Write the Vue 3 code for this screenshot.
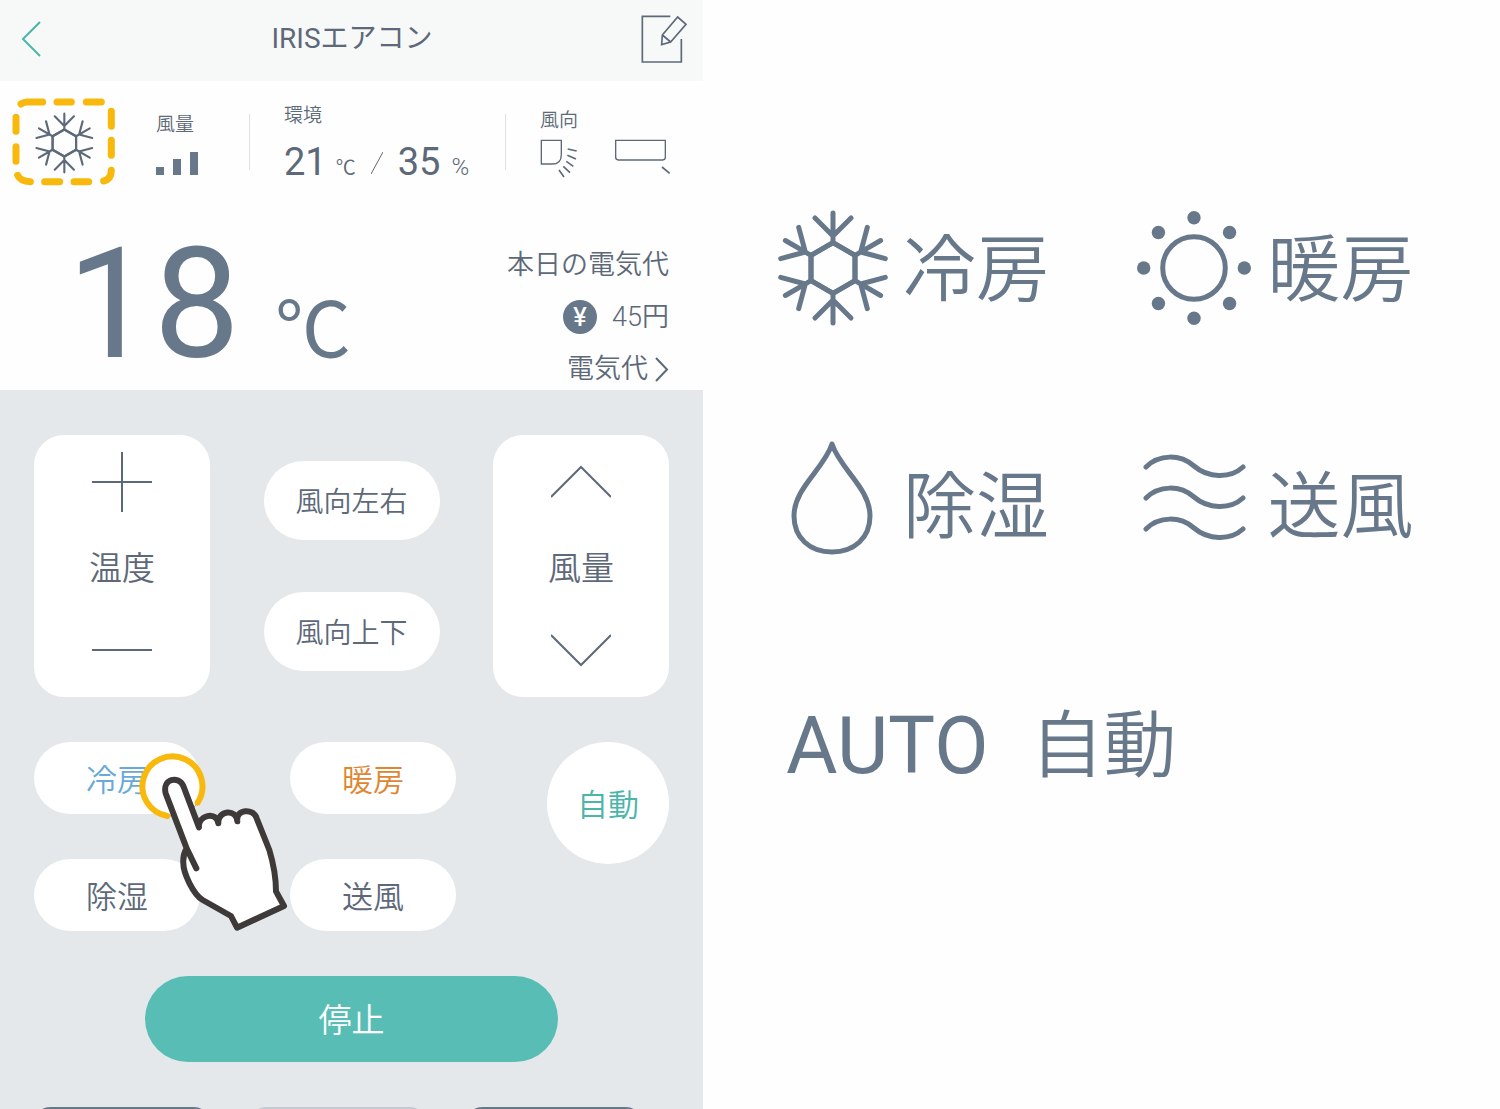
<template>
  <div class="guide">
    <main class="remote">
      <header class="header">
        <button class="icon-button back" aria-label="戻る">
          <svg width="20" height="36" viewBox="0 0 20 36"><path d="M19 1L2 18l17 17" /></svg>
        </button>
        <h1 class="title">IRISエアコン</h1>
        <button class="icon-button edit" aria-label="編集">
          <svg width="48" height="50" viewBox="870 42 144 150">
            <path d="M961 49H877V186H994V117" />
            <path d="M935 134L937 105L983 51L1008 73L962 126ZM937 105L962 126" />
          </svg>
        </button>
      </header>

      <!-- Status -->
      <section class="status">
        <svg class="current-mode" width="104" height="88" viewBox="36 294 312 264">
          <path
            class="dashes"
            d="M63 312Q72 306 80 306H128M171 306H214M259 306H304M334 334V379M334 421V466M334 511Q334 538 311 543M266 545H222M179 545H134M91 545Q62 545 53 526M48 484V440M48 394V352"
          />
          <g class="flake" transform="translate(193 429) scale(1.6)">
            <path v-for="angle in flakeAngles" :key="angle" :d="flakeArm" :transform="`rotate(${angle})`" />
          </g>
        </svg>

        <div class="fan">
          <span class="label">風量</span>
          <svg class="bars" width="42" height="23" viewBox="0 0 42 23">
            <path d="M0 15h8v8H0zM17 7h8v16h-8zM34 0h8v23h-8z" />
          </svg>
        </div>
        <div class="divider"></div>
        <div class="environment">
          <span class="label">環境</span>
          <div class="readings">
            <span class="number">21</span>
            <span class="unit">℃</span>
            <svg class="slash" width="12" height="24" viewBox="0 0 12 24"><path d="M12 1L0 23" /></svg>
            <span class="number">35</span>
            <span class="unit percent">%</span>
          </div>
        </div>
        <div class="divider"></div>
        <div class="direction">
          <span class="label">風向</span>
          <div class="direction-icons">
            <svg width="38" height="40" viewBox="568 418 114 120">
              <path d="M572 422H632V465Q632 493 604 493H572Z" />
              <path class="bold" d="M651 448L678 454M650 467L676 478M647 485L668 500M638 500L658 519M625 511L640 532" />
            </svg>
            <svg width="57" height="40" viewBox="790 418 171 120">
              <path d="M795 422H944V473Q944 481 936 481H803Q795 481 795 473Z" />
              <path class="bold" d="M934 502L957 521" />
            </svg>
          </div>
        </div>
      </section>

      <!-- Set temperature and cost -->
      <section class="summary">
        <div class="temperature">
          <span class="degrees">18</span>
          <span class="celsius">℃</span>
        </div>
        <div class="cost">
          <span>本日の電気代</span>
          <span class="price"><span class="yen">¥</span>45円</span>
          <a class="cost-link" href="#">
            電気代
            <svg width="15" height="25" viewBox="0 0 15 25"><path d="M2 1L13 12.5L2 24" /></svg>
          </a>
        </div>
      </section>

      <section class="panel">
        <div class="adjust">
          <div class="stepper">
            <button class="icon-button" aria-label="温度を上げる">
              <svg width="60" height="60" viewBox="0 0 60 60"><path d="M0 30H60M30 0V60" /></svg>
            </button>
            <span>温度</span>
            <button class="icon-button" aria-label="温度を下げる">
              <svg width="60" height="60" viewBox="0 0 60 60"><path d="M0 30H60" /></svg>
            </button>
          </div>
          <div class="swings">
            <button class="swing">風向左右</button>
            <button class="swing">風向上下</button>
          </div>
          <div class="stepper">
            <button class="icon-button" aria-label="風量を上げる">
              <svg width="60" height="60" viewBox="0 0 60 60"><path d="M0 45L30 15L60 45" /></svg>
            </button>
            <span>風量</span>
            <button class="icon-button" aria-label="風量を下げる">
              <svg width="60" height="60" viewBox="0 0 60 60"><path d="M0 15L30 45L60 15" /></svg>
            </button>
          </div>
        </div>

        <div class="modes">
          <div class="mode-grid">
            <button v-for="mode in modes" :key="mode.name" class="mode" :class="mode.color">{{ mode.name }}</button>
          </div>
          <button class="mode auto">自動</button>
          <svg class="pointer" width="152" height="182" viewBox="414 90 456 546">
            <circle cx="518" cy="198" r="90" fill="#fff" />
            <path class="ring" d="M502 288A90 90 0 1 1 593 248" />
            <path
              class="hand"
              d="M560 385L497 220C486 176 536 166 550 198L597 322C592 286 650 272 655 310C652 270 711 266 712 304C706 266 762 264 770 295L808 390C820 430 828 470 828 514L852 558L711 623L693 588L608 540C580 523 550 460 550 430Q548 405 560 385L589 445"
            />
          </svg>
        </div>

        <button class="stop">停止</button>

        <div class="more">
          <button class="more-button" aria-label="メニュー1"></button>
          <button class="more-button muted" aria-label="メニュー2"></button>
          <button class="more-button" aria-label="メニュー3"></button>
        </div>
      </section>
    </main>

    <!-- Mode icons -->
    <aside class="legend">
      <div class="legend-item">
        <svg width="120" height="116" viewBox="0 0 120 116">
          <g transform="translate(62 58)">
            <path v-for="angle in flakeAngles" :key="angle" :d="flakeArm" :transform="`rotate(${angle})`" />
          </g>
        </svg>
        <span>冷房</span>
      </div>
      <div class="legend-item">
        <svg width="120" height="116" viewBox="0 0 120 116">
          <circle cx="58" cy="58" r="31.3" />
          <circle v-for="dot in sunDots" :key="dot.id" class="dot" :cx="dot.x" :cy="dot.y" r="6.7" />
        </svg>
        <span>暖房</span>
      </div>
      <div class="legend-item">
        <svg width="120" height="116" viewBox="0 0 120 116">
          <path d="M61 -3C53 22 23 41 23 69C23 91 39 105 61 105S99 91 99 69C99 41 69 22 61 -3Z" />
        </svg>
        <span>除湿</span>
      </div>
      <div class="legend-item">
        <svg width="120" height="116" viewBox="0 0 120 116">
          <path
            d="M10 20C23 7 44 7 58 19S94 32 107 20M10 51C23 38 44 38 58 50S94 63 107 51M10 82C23 69 44 69 58 81S94 94 107 82"
          />
        </svg>
        <span>送風</span>
      </div>
      <div class="legend-item legend-auto">
        <span class="auto-mark">AUTO</span>
        <span>自動</span>
      </div>
    </aside>
  </div>
</template>

<script setup>
const modes = [
  { name: '冷房', color: 'cool' },
  { name: '暖房', color: 'heat' },
  { name: '除湿', color: '' },
  { name: '送風', color: '' },
];

// one sixth of the snowflake, repeated around the centre
const flakeAngles = [0, 60, 120, 180, 240, 300];
const flakeArm = 'M-22 -12.7L0 -25.4L22 -12.7M0 -25.4V-55M-18 -50L0 -32L18 -50';

const sunDots = [0, 1, 2, 3, 4, 5, 6, 7].map((i) => ({
  id: i,
  x: 58 + 50.3 * Math.cos((i * Math.PI) / 4),
  y: 58 + 50.3 * Math.sin((i * Math.PI) / 4),
}));
</script>

<style>
body {
  background: #fefefe;
}
</style>

<style scoped>
.guide {
  display: grid;
  grid-template-columns: 703fr 797fr;
  height: 100vh;
  overflow: hidden;
  font-family: Roboto, "Noto Sans CJK JP", sans-serif;
  font-weight: 350;
  color: #5d6979;
}

button {
  font: inherit;
  color: inherit;
  border: none;
  padding: 0 0 2px;
  background: #fff;
  cursor: pointer;
}

svg {
  display: block;
  flex: none;
  fill: none;
  stroke: #5d6979;
  stroke-width: 2;
}

.icon-button {
  padding: 0;
  background: none;
}

.remote {
  display: flex;
  flex-direction: column;
  min-width: 0;
}

.header {
  display: grid;
  grid-template-columns: 48px 1fr 48px;
  align-items: center;
  height: 81px;
  flex: none;
  padding: 0 15px 3px 16px;
  box-sizing: border-box;
  background: #f7f8f8;
}

.title {
  margin: 0;
  text-align: center;
  font-size: 28px;
  line-height: 40px;
  font-weight: 400;
}

.back {
  padding-left: 5px;
}

.back svg {
  stroke: #4bb5a9;
}

.edit svg {
  stroke-width: 5;
}

.status {
  display: flex;
  align-items: flex-end;
  height: 88px;
  padding: 17px 0 0 12px;
}

.dashes {
  stroke: #f8b80c;
  stroke-width: 21;
  stroke-linecap: round;
}

.flake {
  stroke-width: 4;
  stroke-linecap: round;
}

.label {
  font-size: 19px;
  line-height: 24px;
}

.fan {
  display: flex;
  flex-direction: column;
  gap: 15px;
  width: 93px;
  margin: 0 0 11px 40px;
}

.bars {
  fill: #68788b;
  stroke: none;
}

.divider {
  width: 1px;
  height: 56px;
  margin-bottom: 16px;
  background: #dfe2e5;
}

.environment {
  display: flex;
  flex-direction: column;
  gap: 14px;
  width: 221px;
  margin: 0 0 4px 34px;
}

.readings {
  display: flex;
  align-items: baseline;
  height: 40px;
}

.number {
  font-size: 38px;
  font-weight: 400;
  line-height: 40px;
}

.unit {
  margin-left: 9px;
  font-size: 20px;
  line-height: 24px;
}

.percent {
  margin-left: 11px;
  font-size: 24px;
}

.slash {
  margin: 0 15px 4px;
  stroke-width: 1;
}

.direction {
  display: flex;
  flex-direction: column;
  gap: 6px;
  margin: 0 0 7px 34px;
}

.direction-icons {
  display: flex;
  gap: 36px;
}

.direction-icons svg {
  stroke-width: 4;
}

.direction-icons .bold {
  stroke-width: 5;
}

.summary {
  display: flex;
  justify-content: space-between;
  align-items: flex-end;
  padding: 41px 34px 7px 67px;
}

.temperature {
  display: flex;
  align-items: baseline;
  gap: 35px;
  height: 156px;
  font-weight: 400;
  color: #68788b;
}

.degrees {
  font-size: 154px;
  line-height: 156px;
}

.celsius {
  font-size: 76px;
  line-height: 80px;
}

.cost {
  display: flex;
  flex-direction: column;
  align-items: flex-end;
  gap: 24px;
  font-size: 27px;
  line-height: 28px;
}

.price {
  display: flex;
  align-items: center;
}

.yen {
  width: 34px;
  height: 34px;
  margin: -3px 15px -3px 0;
  border-radius: 50%;
  background: #68788b;
  color: #fff;
  font-family: Inter, sans-serif;
  font-size: 25px;
  font-weight: 500;
  line-height: 34px;
  text-align: center;
}

.cost-link {
  display: flex;
  align-items: center;
  gap: 6px;
  color: inherit;
  text-decoration: none;
}

.panel {
  display: flex;
  flex-direction: column;
  flex: 1;
  gap: 45px;
  padding: 45px 34px 0;
  background: #e4e8eb;
}

.adjust {
  display: flex;
  justify-content: space-between;
}

.stepper {
  display: flex;
  flex-direction: column;
  justify-content: space-between;
  align-items: center;
  width: 176px;
  height: 262px;
  padding: 17px 0;
  box-sizing: border-box;
  border-radius: 30px;
  background: #fff;
  font-size: 33px;
}

.swings {
  display: flex;
  flex-direction: column;
  justify-content: center;
  gap: 52px;
}

.swing {
  width: 176px;
  height: 79px;
  border-radius: 40px;
  font-size: 28px;
}

.modes {
  position: relative;
  display: flex;
  justify-content: space-between;
  align-items: flex-start;
}

.mode-grid {
  display: grid;
  grid-template-columns: 166px 166px;
  gap: 45px 90px;
}

.mode {
  height: 72px;
  border-radius: 36px;
  font-size: 31px;
}

.cool {
  color: #68a9d8;
}

.heat {
  color: #df8631;
}

.auto {
  width: 122px;
  height: 122px;
  border-radius: 50%;
  color: #4bb5a9;
}

/* hand tapping the first mode */
.pointer {
  position: absolute;
  left: 104px;
  top: 8px;
  pointer-events: none;
}

.ring {
  stroke: #f8b80c;
  stroke-width: 18;
  stroke-linecap: round;
}

.hand {
  fill: #fff;
  stroke: #3e3a39;
  stroke-width: 18;
  stroke-linecap: round;
  stroke-linejoin: round;
}

.stop {
  align-self: center;
  width: 65%;
  height: 86px;
  flex: none;
  border-radius: 43px;
  background: #58beb5;
  color: #fff;
  font-size: 33px;
}

.more {
  display: flex;
  gap: 40px;
}

.more-button {
  width: 176px;
  height: 72px;
  border-radius: 16px;
  background: #68788b;
}

.muted {
  background: #c4cad1;
}

.legend {
  display: grid;
  grid-template-columns: 1fr 1fr;
  grid-auto-rows: 116px;
  row-gap: 121px;
  padding: 210px 0 0 68px;
  font-size: 73px;
  line-height: 116px;
  color: #68788b;
}

.legend-item {
  display: flex;
  align-items: center;
  gap: 12px;
  white-space: nowrap;
}

.legend-item span {
  padding-top: 4px;
}

.legend-item svg {
  overflow: visible;
  stroke: #68788b;
  stroke-width: 5;
  stroke-linecap: round;
  stroke-linejoin: round;
}

.legend-item .dot {
  fill: #68788b;
  stroke: none;
}

.legend-auto {
  grid-column: 1 / -1;
  gap: 42px;
  padding: 4px 0 0 15px;
}

.auto-mark {
  font-size: 79px;
  font-weight: 400;
}
</style>
